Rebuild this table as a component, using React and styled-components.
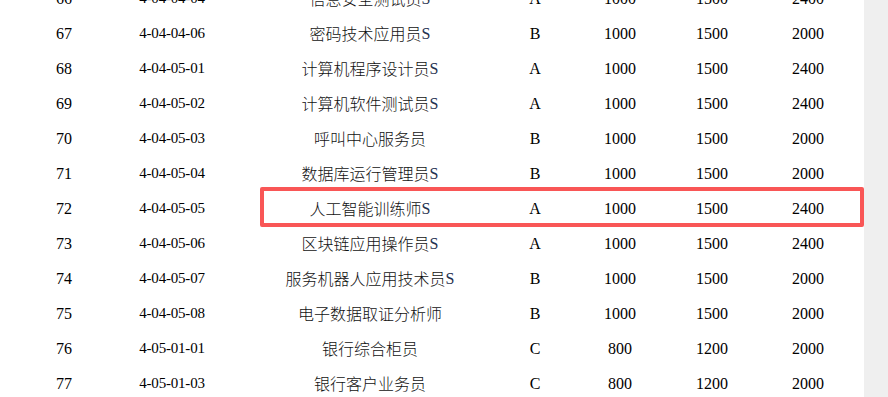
import React from "react";
import styled, { createGlobalStyle } from "styled-components";

const GlobalStyle = createGlobalStyle`
  html, body {
    margin: 0;
    padding: 0;
    background: #fff;
    overflow: hidden;
  }
  body {
    font-family: "Liberation Serif", "Noto Sans CJK SC", serif;
    color: #000;
  }
`;

const Page = styled.div`
  display: flex;
  width: 888px;
  height: 397px;
  overflow: hidden;
`;

const Main = styled.div`
  flex: 0 0 864px;
  width: 864px;
  overflow: hidden;
`;

const Track = styled.div`
  flex: 0 0 24px;
  background: #efefef;
`;

// list is scrolled: row 66 sits half above the top edge
const List = styled.div`
  margin-top: -19px;
`;

const Row = styled.div`
  position: relative;
  display: grid;
  grid-template-columns: 128px 88px 308px 22px 148px 36px 156px;
  height: 35px;
  align-items: center;
  width: 886px;
`;

const Cell = styled.div`
  display: flex;
  justify-content: center;
  white-space: nowrap;
  font-size: 16px;
  line-height: 35px;
`;

const Code = styled(Cell)`
  font-size: 15px;
  letter-spacing: -0.2px;
`;

const Name = styled(Cell)`
  font-family: "Noto Sans CJK SC", "Liberation Sans", sans-serif;
  font-weight: 300;
  color: #111;
`;

const Suffix = styled.span`
  font-family: "Liberation Serif", serif;
  font-weight: 400;
  color: #1f3150;
`;

const Highlight = styled.div`
  position: absolute;
  left: 260px;
  width: 604px;
  top: -4px;
  bottom: -1px;
  box-sizing: border-box;
  border: 4px solid #f95656;
  border-radius: 2px;
  pointer-events: none;
`;

const rows = [
  ["66", "4-04-04-04", "信息安全测试员", true, "A", "1000", "1500", "2400"],
  ["67", "4-04-04-06", "密码技术应用员", true, "B", "1000", "1500", "2000"],
  ["68", "4-04-05-01", "计算机程序设计员", true, "A", "1000", "1500", "2400"],
  ["69", "4-04-05-02", "计算机软件测试员", true, "A", "1000", "1500", "2400"],
  ["70", "4-04-05-03", "呼叫中心服务员", false, "B", "1000", "1500", "2000"],
  ["71", "4-04-05-04", "数据库运行管理员", true, "B", "1000", "1500", "2000"],
  ["72", "4-04-05-05", "人工智能训练师", true, "A", "1000", "1500", "2400"],
  ["73", "4-04-05-06", "区块链应用操作员", true, "A", "1000", "1500", "2400"],
  ["74", "4-04-05-07", "服务机器人应用技术员", true, "B", "1000", "1500", "2000"],
  ["75", "4-04-05-08", "电子数据取证分析师", false, "B", "1000", "1500", "2000"],
  ["76", "4-05-01-01", "银行综合柜员", false, "C", "800", "1200", "2000"],
  ["77", "4-05-01-03", "银行客户业务员", false, "C", "800", "1200", "2000"],
];

const App = () => (
  <>
    <GlobalStyle />
    <Page>
      <Main>
        <List>
          {rows.map(([no, code, name, s, grade, a, b, c]) => (
            <Row key={no}>
              <Cell>{no}</Cell>
              <Code>{code}</Code>
              <Name>
                {name}
                {s && <Suffix>S</Suffix>}
              </Name>
              <Cell>{grade}</Cell>
              <Cell>{a}</Cell>
              <Cell>{b}</Cell>
              <Cell>{c}</Cell>
              {no === "72" && <Highlight />}
            </Row>
          ))}
        </List>
      </Main>
      <Track />
    </Page>
  </>
);

export default App;
